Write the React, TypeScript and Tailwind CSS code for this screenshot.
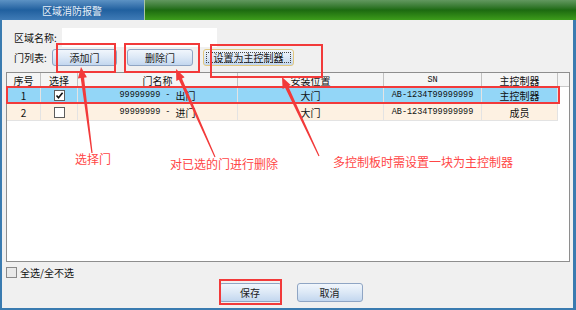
import React from "react";

type Pt = [number, number];

// tapered annotation arrow: wide near the head, thin at the tail
function arrowPoints(tip: Pt, tail: Pt) {
  const dx = tip[0] - tail[0];
  const dy = tip[1] - tail[1];
  const len = Math.hypot(dx, dy);
  const ux = dx / len;
  const uy = dy / len;
  const nx = -uy;
  const ny = ux;
  const head = 11;
  const hw = 4.5;
  const sw = 1.7;
  const tw = 0.6;
  const bx = tip[0] - ux * head;
  const by = tip[1] - uy * head;
  const pts: Pt[] = [
    [tail[0] + nx * tw, tail[1] + ny * tw],
    [bx + nx * sw, by + ny * sw],
    [bx + nx * hw, by + ny * hw],
    tip,
    [bx - nx * hw, by - ny * hw],
    [bx - nx * sw, by - ny * sw],
    [tail[0] - nx * tw, tail[1] - ny * tw],
  ];
  return pts.map(([x, y]) => `${x.toFixed(1)},${y.toFixed(1)}`).join(" ");
}

const Btn = ({ label, w, focus }: { label: string; w: string; focus?: boolean }) => (
  <div
    className={`${w} h-full rounded-[3px] border ${
      focus ? "border-[#e2c77e]" : "border-[#8fa5c4]"
    } bg-gradient-to-b from-[#f1f6fc] via-[#dce8f6] to-[#c3d7ef] p-[2px]`}
  >
    <div
      className={`flex h-full items-center justify-center text-[10px] text-[#1b1b1b] ${
        focus ? "border border-dotted border-[#444]" : ""
      }`}
    >
      {label}
    </div>
  </div>
);

const Check = ({ on }: { on?: boolean }) => (
  <div className="flex h-[11px] w-[11px] items-center justify-center border border-[#5c5c5c] bg-white">
    {on && (
      <svg width="9" height="9" viewBox="0 0 9 9">
        <path d="M1.5 4.5 L3.5 6.8 L7.6 1.8" fill="none" stroke="#111" strokeWidth="1.6" />
      </svg>
    )}
  </div>
);

const rows = [
  { no: "1", on: true, name: "出门", place: "大门", sn: "AB-1234T99999999", role: "主控制器", bg: "bg-[#93d6f7]" },
  { no: "2", on: false, name: "进门", place: "大门", sn: "AB-1234T99999999", role: "成员", bg: "bg-[#fdf1e2]" },
];

const grid = "grid grid-cols-[34px_37px_160px_146px_98px_76px_1fr]";
const mono = "font-['Liberation_Mono',monospace] text-[8.5px] whitespace-pre";

const App = () => {
  return (
    <div className="relative h-[310px] w-[576px] overflow-hidden bg-[#f0f0f0] font-['Noto_Sans_CJK_SC',sans-serif] text-[#111]">
      {/* title bar */}
      <div className="flex h-[20px]">
        <div className="flex w-[144px] items-center justify-center bg-gradient-to-b from-[#5c92c4] via-[#20609f] to-[#3f7bb6] text-[10px] text-[#e8f0f8]">
          区域消防报警
        </div>
        <div className="w-px bg-[#a9c6a4]" />
        <div className="flex-1 bg-gradient-to-b from-[#62985f] via-[#1c6a10] to-[#3d9c1b]" />
      </div>

      {/* window body */}
      <div className="flex h-[290px] flex-col border-b-2 border-l-2 border-r-[3px] border-[#3a7bb0]">
        <div className="mt-[8px] flex h-[19px] items-center pl-[12px]">
          <span className="w-[48px] text-[10px]">区域名称:</span>
          <div className="h-full w-[155px] bg-white" />
        </div>

        <div className="mt-[2px] flex h-[17px] items-center pl-[12px]">
          <span className="w-[38px] text-[10px]">门列表:</span>
          <div className="flex h-full gap-[10px]">
            <Btn label="添加门" w="w-[65px]" />
            <Btn label="删除门" w="w-[66px]" />
            <Btn label="设置为主控制器" w="w-[91px]" focus />
          </div>
        </div>

        <div className="ml-[4px] mt-[6px] h-[190px] w-[564px] border border-[#8e8e8e] bg-white">
          <div className={`${grid} h-[14px] border-b border-[#c9c9c9] bg-[#f5f5f5] text-[10px]`}>
            {["序号", "选择", "门名称", "安装位置", "SN", "主控制器", ""].map((h, i) => (
              <div
                key={i}
                className={`flex items-center justify-center ${i < 6 ? "border-r border-[#c2c2c2]" : ""} ${
                  h === "SN" ? mono : ""
                }`}
              >
                {h}
              </div>
            ))}
          </div>
          {rows.map((r) => (
            <div key={r.no} className={`${grid} h-[17px] text-[10px]`}>
              <div className={`${r.bg} flex items-center justify-center border-b border-r border-[#e3e3e3]`}>{r.no}</div>
              <div className={`${r.bg} flex items-center justify-center border-b border-r border-[#e3e3e3]`}>
                <Check on={r.on} />
              </div>
              <div className={`${r.bg} flex items-center justify-center border-b border-r border-[#e3e3e3]`}>
                <span className={mono}>99999999 - </span>
                <span>{r.name}</span>
              </div>
              <div className={`${r.bg} flex items-center justify-center border-b border-r border-[#e3e3e3]`}>{r.place}</div>
              <div className={`${r.bg} flex items-center justify-center border-b border-r border-[#e3e3e3] ${mono}`}>{r.sn}</div>
              <div className={`${r.bg} flex items-center justify-center border-b border-r border-[#e3e3e3]`}>{r.role}</div>
              <div />
            </div>
          ))}
        </div>

        <div className="ml-[4px] mt-[4px] flex h-[13px] items-center gap-[3px]">
          <div className="h-[11px] w-[11px] border border-[#8a8a8a] bg-[#e9e9e9]" />
          <span className="text-[10px]">全选/全不选</span>
        </div>

        <div className="mt-[4px] flex h-[19px] justify-center gap-[15px] pl-[6px]">
          <Btn label="保存" w="w-[63px]" />
          <Btn label="取消" w="w-[66px]" />
        </div>
      </div>

      {/* red annotation overlay */}
      <div className="pointer-events-none absolute left-[56px] top-[43px] h-[30px] w-[60px] border-2 border-[#f23a3a]" />
      <div className="pointer-events-none absolute left-[124px] top-[43px] h-[30px] w-[76px] border-2 border-[#f23a3a]" />
      <div className="pointer-events-none absolute left-[210px] top-[44px] h-[34px] w-[113px] border-2 border-[#f23a3a]" />
      <div className="pointer-events-none absolute left-[6px] top-[86px] h-[18px] w-[554px] border-2 border-[#f23a3a]" />
      <div className="pointer-events-none absolute left-[219px] top-[279px] h-[26px] w-[63px] border-2 border-[#f23a3a]" />

      <svg className="pointer-events-none absolute left-0 top-0" width="576" height="310">
        <polygon points={arrowPoints([81, 67], [92, 153])} fill="#f23a3a" />
        <polygon points={arrowPoints([176, 69], [215, 157])} fill="#f23a3a" />
        <polygon points={arrowPoints([282, 77], [319, 156])} fill="#f23a3a" />
      </svg>

      <span className="absolute left-[75px] top-[150px] text-[12px] text-[#ff4646]">选择门</span>
      <span className="absolute left-[170px] top-[155px] text-[12px] text-[#ff4646]">对已选的门进行删除</span>
      <span className="absolute left-[333px] top-[153px] text-[12px] text-[#ff4646]">多控制板时需设置一块为主控制器</span>
    </div>
  );
};

export default App;
